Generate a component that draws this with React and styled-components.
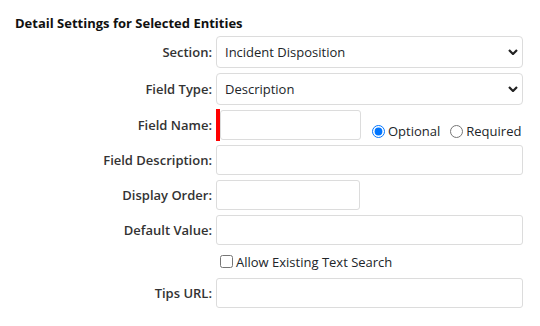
import React from "react";
import styled, { createGlobalStyle } from "styled-components";

const GlobalStyle = createGlobalStyle`
  html, body { margin: 0; padding: 0; background: #ffffff; }
  body { font-family: "Open Sans", "Noto Sans", sans-serif; font-size: 13px; color: #212529; }
`;

const Page = styled.div`
  padding: 14px 0 0 15px;
  width: 525px;
  box-sizing: border-box;
`;

const Title = styled.h3`
  margin: 0 0 4px 0;
  font-size: 13px;
  line-height: 18px;
  font-weight: 700;
  color: #111;
`;

const Form = styled.div`
  display: grid;
  grid-template-columns: 197px 307px;
  column-gap: 4px;
  row-gap: 5px;
`;

const Label = styled.label`
  display: flex;
  align-items: center;
  justify-content: flex-end;
  font-weight: 600;
  color: #333;
  white-space: nowrap;
`;

const Cell = styled.div`
  display: flex;
  align-items: ${(p) => (p.$bottom ? "flex-end" : "center")};
  min-height: ${(p) => p.$h || 30}px;
`;

const SelectWrap = styled.div`
  position: relative;
  width: 100%;
`;

const Select = styled.select`
  appearance: none;
  -webkit-appearance: none;
  display: block;
  width: 100%;
  height: 32px;
  box-sizing: border-box;
  border: 1px solid #dcdcdc;
  border-radius: 4px;
  background: #fff;
  padding: 0 24px 0 8px;
  font: inherit;
  color: #212529;
  outline: none;
`;

const Chevron = styled.svg`
  position: absolute;
  right: 5px;
  top: 50%;
  margin-top: -3px;
  pointer-events: none;
`;

const Input = styled.input`
  box-sizing: border-box;
  height: 30px;
  width: ${(p) => p.$w || "100%"};
  border: 1px solid #dcdcdc;
  border-radius: 3px;
  background: #fff;
  padding: 0 6px;
  font: inherit;
  outline: none;
  margin: 0;
`;

const RequiredBar = styled.span`
  display: block;
  width: 4px;
  height: 32px;
  margin: -1px 0;
  background: #ff0000;
  align-self: center;
`;

const RadioGroup = styled.div`
  display: flex;
  align-items: center;
  gap: 5px;
  margin-left: 6px;
  height: 18px;
`;

const Option = styled.label`
  display: flex;
  align-items: center;
  line-height: 18px;
  color: #212529;
  white-space: nowrap;
  input { margin: 0 3px 0 5px; width: 13px; height: 13px; }
`;

const CheckLabel = styled.label`
  display: flex;
  align-items: center;
  line-height: 18px;
  color: #212529;
  white-space: nowrap;
  input { margin: 0 3px 0 4px; width: 13px; height: 13px; }
`;

function SelectField({ value, options }) {
  return (
    <SelectWrap>
      <Select defaultValue={value}>
        {options.map((o) => (
          <option key={o}>{o}</option>
        ))}
      </Select>
      <Chevron width="10" height="6" viewBox="0 0 10 6">
        <polyline points="1,1 5,5 9,1" fill="none" stroke="#222" strokeWidth="2.2" />
      </Chevron>
    </SelectWrap>
  );
}

export default function App() {
  return (
    <>
      <GlobalStyle />
      <Page>
        <Title>Detail Settings for Selected Entities</Title>
        <Form>
          <Label>Section:</Label>
          <Cell $h={32}>
            <SelectField value="Incident Disposition" options={["Incident Disposition"]} />
          </Cell>

          <Label>Field Type:</Label>
          <Cell $h={32}>
            <SelectField value="Description" options={["Description"]} />
          </Cell>

          <Label>Field Name:</Label>
          <Cell $bottom>
            <RequiredBar />
            <Input $w="141px" />
            <RadioGroup>
              <Option>
                <input type="radio" name="req" defaultChecked />
                Optional
              </Option>
              <Option>
                <input type="radio" name="req" />
                Required
              </Option>
            </RadioGroup>
          </Cell>

          <Label>Field Description:</Label>
          <Cell>
            <Input />
          </Cell>

          <Label>Display Order:</Label>
          <Cell>
            <Input $w="144px" />
          </Cell>

          <Label>Default Value:</Label>
          <Cell>
            <Input />
          </Cell>

          <span />
          <Cell $h={23}>
            <CheckLabel>
              <input type="checkbox" />
              Allow Existing Text Search
            </CheckLabel>
          </Cell>

          <Label>Tips URL:</Label>
          <Cell>
            <Input />
          </Cell>
        </Form>
      </Page>
    </>
  );
}
